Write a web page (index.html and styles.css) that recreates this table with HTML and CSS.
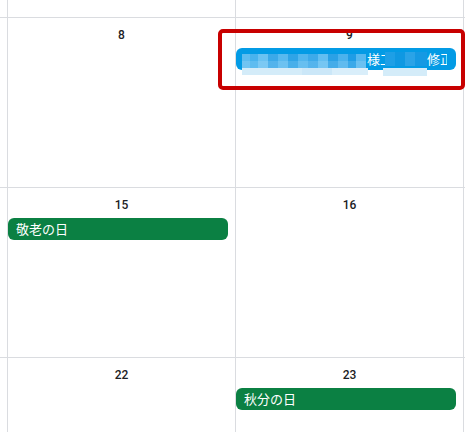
FILE: index.html
```html
<!DOCTYPE html>
<html lang="ja">
<head>
<meta charset="utf-8">
<link rel="stylesheet" href="styles.css">
</head>
<body>
<div class="page">
  <div class="grid">
    <div class="cell"></div><div class="cell"></div><div class="cell"></div><div class="cell"></div>

    <div class="cell"></div>
    <div class="cell day"><div class="date">8</div></div>
    <div class="cell day">
      <div class="date">9</div>
      <div class="chip-wrap">
        <div class="chip blue">
          <span class="redact-a"></span><span class="txt t1">様工</span><span class="redact-b"></span><span class="txt t2">修正</span>
        </div>
        <span class="px px-a"></span>
        <span class="px px-b"></span>
        <span class="px px-c"></span>
      </div>
    </div>
    <div class="cell"></div>

    <div class="cell"></div>
    <div class="cell day"><div class="date">15</div><div class="chip green">敬老の日</div></div>
    <div class="cell day"><div class="date">16</div></div>
    <div class="cell"></div>

    <div class="cell"></div>
    <div class="cell day"><div class="date">22</div></div>
    <div class="cell day"><div class="date">23</div><div class="chip green">秋分の日</div></div>
    <div class="cell"></div>
  </div>
  <div class="highlight"></div>
</div>
</body>
</html>
```

FILE: styles.css
```css
html, body {
  margin: 0;
  padding: 0;
  background: #ffffff;
  overflow: hidden;
}
.page {
  position: relative;
  width: 465px;
  height: 432px;
  overflow: hidden;
  font-family: Roboto, "Noto Sans CJK JP", sans-serif;
}
.grid {
  display: grid;
  grid-template-columns: 7px 227px 227px 10px;
  grid-template-rows: 17px 169px 169px 100px;
  gap: 1px;
  background: #dadce0;
  width: 475px;
}
.cell {
  background: #ffffff;
  min-width: 0;
}
.day {
  display: flex;
  flex-direction: column;
  padding-top: 9px;
}
.date {
  text-align: center;
  font-size: 12px;
  font-weight: 500;
  line-height: 16px;
  height: 16px;
  color: #202124;
}
.chip {
  margin-top: 5px;
  width: 220px;
  height: 22px;
  box-sizing: border-box;
  padding: 0 8px;
  border-radius: 6px;
  color: #ffffff;
  font-family: "Noto Sans CJK JP", Roboto, sans-serif;
  font-size: 13px;
  line-height: 22px;
  white-space: nowrap;
  overflow: hidden;
}
.chip.green {
  background: #0b8043;
}
.chip-wrap {
  position: relative;
  width: 220px;
}
.chip.blue {
  background: #039be5;
  display: flex;
  align-items: center;
}
.chip.blue .txt {
  flex: none;
  overflow: hidden;
}
.chip.blue .t1 {
  width: 18px;
}
.chip.blue .t2 {
  width: 20px;
}
.redact-a {
  flex: none;
  width: 123px;
}
.redact-b {
  flex: none;
  width: 42px;
  height: 14px;
  background: linear-gradient(to right, #1e9fe6 0 10px, #0f98e2 10px 20px, #2aa3e7 20px 30px, #1599e3 30px 42px);
}
.px {
  position: absolute;
}
.px-a {
  left: 6px;
  top: 11px;
  width: 124px;
  height: 14px;
  background:
    linear-gradient(to bottom, transparent 0 7px, rgba(255,255,255,0.12) 7px 14px),
    linear-gradient(to right,
      #5dbcf0 0 8px, #48b3ee 8px 16px, #6ac2f2 16px 26px, #3ba9e9 26px 36px,
      #58b9ef 36px 46px, #2fa4e7 46px 56px, #52b6ee 56px 66px, #3daaea 66px 76px,
      #62bef1 76px 86px, #2aa1e6 86px 96px, #4ab2ed 96px 106px, #1f9de6 106px 114px,
      #56b8ef 114px 124px);
}
.px-b {
  left: 6px;
  top: 25px;
  width: 126px;
  height: 7px;
  background: linear-gradient(to right, #d4ecf9 0 60px, #cbe7f8 60px 90px, #d9eefa 90px 126px);
}
.px-c {
  left: 147px;
  top: 25px;
  width: 44px;
  height: 8px;
  background: #d4ecf9;
}
.highlight {
  position: absolute;
  left: 218px;
  top: 29px;
  width: 247px;
  height: 61px;
  box-sizing: border-box;
  border: 4px solid #c80000;
  border-radius: 5px;
}
```
